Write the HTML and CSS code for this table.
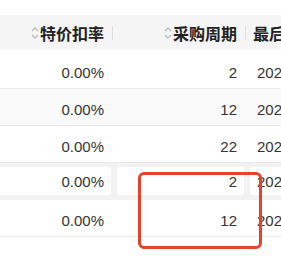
FILE: index.html
```html
<!DOCTYPE html>
<html lang="zh-CN">

<head>
    <meta charset="UTF-8">
    <title>采购明细</title>
    <link rel="stylesheet" href="styles.css">
</head>

<body>
    <div class="page">
        <div class="grid">
            <div class="row head">
                <div class="cell c1">
                    <svg class="sort" width="8" height="14" viewBox="0 0 8 14"><path d="M1 5 L4 2 L7 5 M1 9 L4 12 L7 9" fill="none" stroke="#bbb" stroke-width="1.3"/></svg>
                    <span>特价扣率</span><i class="sep"></i>
                </div>
                <div class="cell c2">
                    <svg class="sort" width="8" height="14" viewBox="0 0 8 14"><path d="M1 5 L4 2 L7 5 M1 9 L4 12 L7 9" fill="none" stroke="#bbb" stroke-width="1.3"/></svg>
                    <span>采购周期</span><i class="sep"></i>
                </div>
                <div class="cell c3"><span>最后采购</span></div>
            </div>

            <div class="row first">
                <div class="cell c1">0.00%</div>
                <div class="cell c2">2</div>
                <div class="cell c3">2024-01-05</div>
            </div>
            <div class="row stripe">
                <div class="cell c1">0.00%</div>
                <div class="cell c2">12</div>
                <div class="cell c3">2024-01-05</div>
            </div>
            <div class="row">
                <div class="cell c1">0.00%</div>
                <div class="cell c2">22</div>
                <div class="cell c3">2024-01-05</div>
            </div>
            <div class="row editing">
                <div class="cell c1"><div class="box">0.00%</div></div>
                <div class="cell c2"><div class="box">2</div></div>
                <div class="cell c3"><div class="box">2024-01-05</div></div>
            </div>
            <div class="row">
                <div class="cell c1">0.00%</div>
                <div class="cell c2">12</div>
                <div class="cell c3">2024-01-05</div>
            </div>

            <div class="mark"></div>
        </div>
    </div>
</body>

</html>
```

FILE: styles.css
```css
body {
    margin: 0;
    background: #fff;
    font-family: "Liberation Sans", "Noto Sans CJK SC", sans-serif;
    color: #333;
}

.page {
    width: 281px;
    height: 264px;
    overflow: hidden;
}

.grid {
    position: relative;
    margin-top: 15px;
    width: 400px;
}

.row {
    display: flex;
    height: 37px;
    box-sizing: border-box;
    align-items: center;
    border-bottom: 1px solid #ebebeb;
    font-size: 15px;
}

.row.first {
    margin-top: 2px;
}

.row.stripe {
    background: #fafafa;
}

.row.head {
    height: 35px;
    background: #f5f5f6;
    border-bottom: none;
    font-size: 16px;
    font-weight: bold;
    color: #222;
}

.cell {
    display: flex;
    align-items: center;
    box-sizing: border-box;
    height: 100%;
    padding-top: 4px;
    white-space: nowrap;
}

.head .cell {
    position: relative;
    padding-top: 0;
}

.c1 {
    width: 114px;
    justify-content: flex-end;
    padding-right: 10px;
}

.c2 {
    width: 133px;
    justify-content: flex-end;
    padding-right: 10px;
}

.c3 {
    flex: 1;
    padding-left: 10px;
}

.head .c3 {
    padding-left: 6px;
}

.sort {
    margin-right: 1px;
}

.sep {
    position: absolute;
    right: 1px;
    top: 11px;
    width: 1px;
    height: 14px;
    background: #dcdcdc;
}

.row.editing {
    background: #f2f2f2;
    border-bottom: none;
}

.editing .cell {
    padding: 4px 3px 5px;
}

.editing .c1 {
    padding-right: 3px;
    margin-left: -20px;
    width: 134px;
}

.box {
    flex: 1;
    height: 100%;
    box-sizing: border-box;
    background: #fff;
    border-radius: 3px;
    display: flex;
    align-items: center;
    justify-content: flex-end;
    padding-right: 7px;
}

.editing .c3 .box {
    justify-content: flex-start;
    padding-left: 7px;
}

.mark {
    position: absolute;
    left: 138px;
    top: 157px;
    width: 118px;
    height: 71px;
    border: 3px solid #e9412d;
    border-radius: 6px;
}
```
